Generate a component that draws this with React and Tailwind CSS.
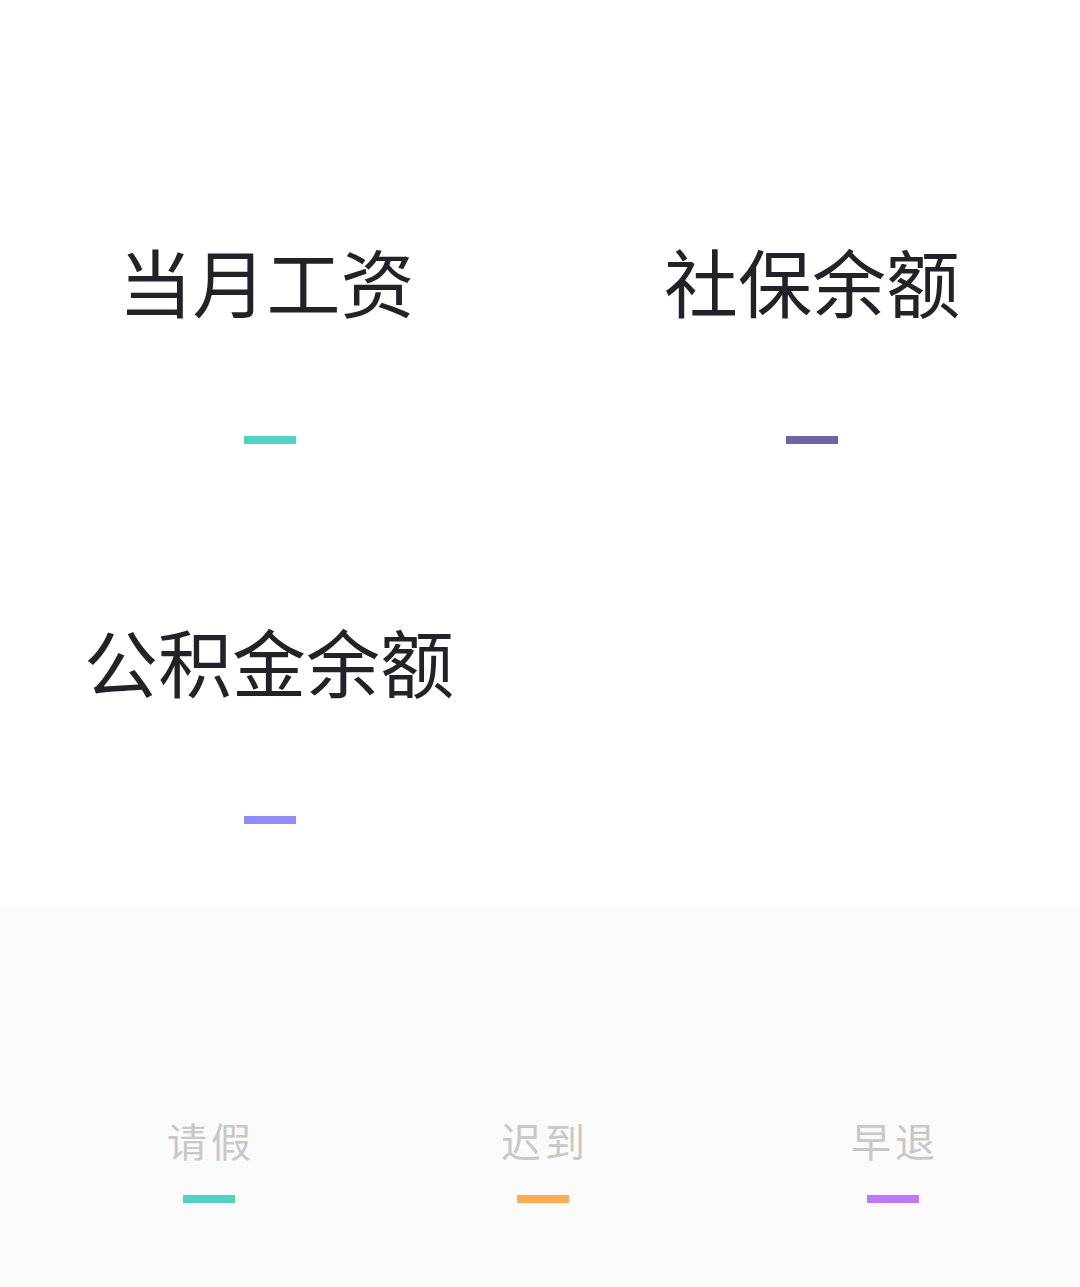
import React from 'react';

const font = { fontFamily: '"Noto Sans CJK SC", "Noto Sans", sans-serif' };

const balances = [
  { label: '当月工资', bar: 'bg-[#4fd4c4]', pad: '', shift: 'mr-[7px]' },
  { label: '社保余额', bar: 'bg-[#6b68a6]', pad: 'pl-[4px]', shift: '' },
  { label: '公积金余额', bar: 'bg-[#8f8cff]', pad: '', shift: 'mr-[2px]' },
];

const attendance = [
  { label: '请假', bar: 'bg-[#4fd4c4]', ml: 'ml-[167px]' },
  { label: '迟到', bar: 'bg-[#ffab50]', ml: 'ml-[250px]' },
  { label: '早退', bar: 'bg-[#bf77ff]', ml: 'ml-[266px]' },
];

const App = () => {
  return (
    <div className="w-[1080px] h-[1287px] flex flex-col" style={font}>
      <div className="bg-white h-[907px] pt-[244px] grid grid-cols-2 content-start gap-y-[180px]">
        {balances.map(item => (
          <div key={item.label} className={`flex flex-col items-center ${item.pad}`}>
            <div className={`text-[74px] leading-[72px] text-[#222228] whitespace-nowrap ${item.shift}`}>{item.label}</div>
            <div className={`mt-[120px] w-[52px] h-[8px] ${item.bar}`} />
          </div>
        ))}
      </div>
      <div className="bg-[#fafafa] flex-1 flex pt-[213px]">
        {attendance.map(item => (
          <div key={item.label} className={`flex flex-col items-center w-[84px] ${item.ml}`}>
            <div className="text-[40px] leading-[40px] text-[#c8c8c8] whitespace-nowrap tracking-[4px] pl-[4px]">{item.label}</div>
            <div className={`mt-[35px] w-[52px] h-[8px] ${item.bar}`} />
          </div>
        ))}
      </div>
    </div>
  );
};

export default App;
